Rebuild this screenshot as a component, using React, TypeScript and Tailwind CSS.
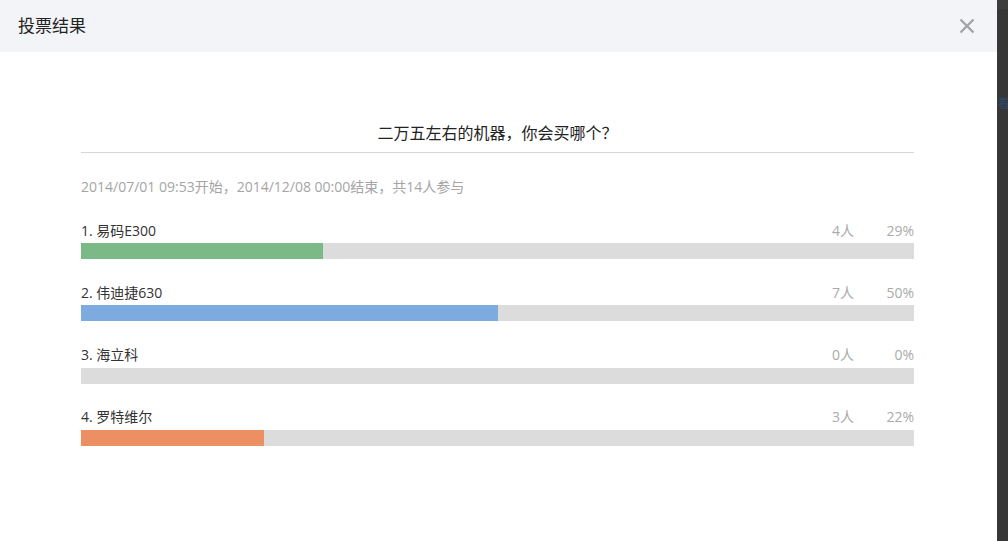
import React from "react";

const items = [
  { label: "1. 易码E300", count: 4, pct: 29, color: "bg-[#7bb986]" },
  { label: "2. 伟迪捷630", count: 7, pct: 50, color: "bg-[#7eabdf]" },
  { label: "3. 海立科", count: 0, pct: 0, color: "bg-[#7bb986]" },
  { label: "4. 罗特维尔", count: 3, pct: 22, color: "bg-[#ec9063]" },
];

export default function App() {
  return (
    <div
      className="flex w-[1008px] h-[541px] overflow-hidden bg-[#373737]"
      style={{ fontFamily: '"Open Sans", "Noto Sans CJK SC", sans-serif' }}
    >
      <div className="w-[997px] shrink-0 h-full bg-white flex flex-col">
        <div className="h-[52px] bg-[#f3f4f8] flex items-center justify-between pl-[18px] pr-[22px]">
          <span className="text-[17px] text-[#222]">投票结果</span>
          <svg width="16" height="16" viewBox="0 0 16 16">
            <path d="M1.5 1.5 L14.5 14.5 M14.5 1.5 L1.5 14.5" stroke="#a3a3a3" strokeWidth="2.4" />
          </svg>
        </div>
        <div className="pl-[81px] pr-[83px] pt-[69px]">
          <div className="border-b border-[#d6d6d6] pb-[7px] text-center text-[16px] leading-[24px] text-[#222]">
            二万五左右的机器，你会买哪个？
          </div>
          <div className="mt-[24px] text-[14px] leading-[20px] text-[#a5a5a5]">
            2014/07/01 09:53开始，2014/12/08 00:00结束，共14人参与
          </div>
          <div className="mt-[23px] flex flex-col gap-[23.34px]">
            {items.map((it) => (
              <div key={it.label}>
                <div className="flex items-center h-[20px] text-[14px]">
                  <span className="flex-1 text-[#333]">{it.label}</span>
                  <span className="text-[#aaa]">{it.count}人</span>
                  <span className="w-[60px] text-right text-[#aaa]">{it.pct}%</span>
                </div>
                <div className="mt-[3px] h-[16px] bg-[#dcdcdc]">
                  <div className={`h-full ${it.color}`} style={{ width: `${it.pct}%` }} />
                </div>
              </div>
            ))}
          </div>
        </div>
      </div>
      <div className="w-[11px] shrink-0 h-full flex flex-col overflow-hidden bg-[#373737]">
        <div className="h-[9px] bg-[#3d3d3d]" />
        <div className="mt-[88px] h-[14px] overflow-hidden text-[12px] leading-[14px] text-[#2e4a6e] whitespace-nowrap pl-[1px]">
          看
        </div>
      </div>
    </div>
  );
}
